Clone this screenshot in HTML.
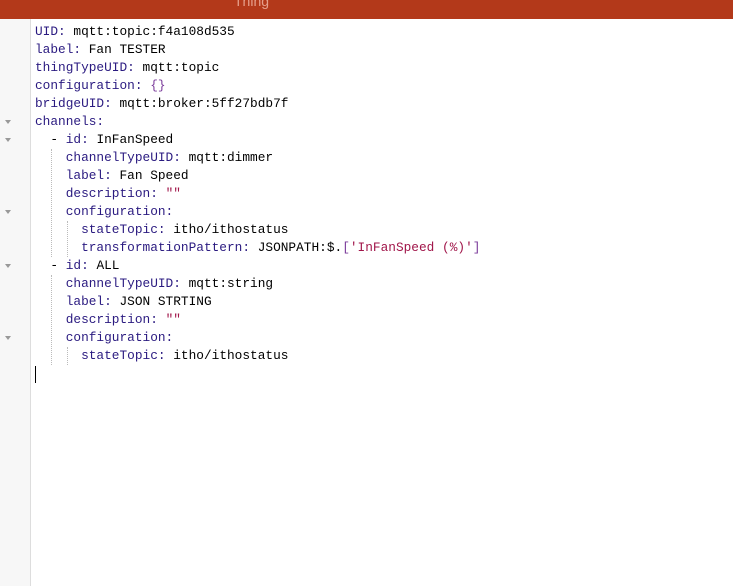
<!DOCTYPE html>
<html><head><meta charset="utf-8"><style>
html,body{margin:0;padding:0;width:733px;height:586px;overflow:hidden;background:#fff;}
.hdr{position:absolute;left:0;top:0;width:733px;height:19px;background:#b3391a;}
.hdr span{position:absolute;left:234px;top:-7px;font:14px "Liberation Sans",sans-serif;color:#e6a08c;}
.gut{position:absolute;left:0;top:19px;width:30px;height:567px;background:#f7f7f7;border-right:1px solid #ddd;}
.arr{position:absolute;left:5px;width:0;height:0;border-left:3px solid transparent;border-right:3px solid transparent;border-top:4px solid #999;}
.code{position:absolute;left:35px;top:23px;font:12.8px/18px "Liberation Mono",monospace;color:#000;white-space:pre;}
.k{color:#2a1a80;}
.b{color:#7a3a9a;}
.s{color:#a1164a;}
.g{position:absolute;border-left:1px dotted #bbb;width:0;}
.cur{position:absolute;left:35px;top:366px;width:1px;height:17px;background:#000;}
</style></head><body>
<div class="hdr"><span>Thing</span></div>
<div class="gut"></div>
<div class="arr" style="top:120px"></div>
<div class="arr" style="top:138px"></div>
<div class="arr" style="top:210px"></div>
<div class="arr" style="top:264px"></div>
<div class="arr" style="top:336px"></div>
<div class="g" style="left:51px;top:149px;height:108px"></div>
<div class="g" style="left:67px;top:221px;height:36px"></div>
<div class="g" style="left:51px;top:275px;height:90px"></div>
<div class="g" style="left:67px;top:347px;height:18px"></div>
<div class="code"><span class="k">UID:</span> mqtt:topic:f4a108d535
<span class="k">label:</span> Fan TESTER
<span class="k">thingTypeUID:</span> mqtt:topic
<span class="k">configuration:</span> <span class="b">{}</span>
<span class="k">bridgeUID:</span> mqtt:broker:5ff27bdb7f
<span class="k">channels:</span>
  - <span class="k">id:</span> InFanSpeed
    <span class="k">channelTypeUID:</span> mqtt:dimmer
    <span class="k">label:</span> Fan Speed
    <span class="k">description:</span> <span class="s">""</span>
    <span class="k">configuration:</span>
      <span class="k">stateTopic:</span> itho/ithostatus
      <span class="k">transformationPattern:</span> JSONPATH:$.<span class="b">[</span><span class="s">'InFanSpeed (%)'</span><span class="b">]</span>
  - <span class="k">id:</span> ALL
    <span class="k">channelTypeUID:</span> mqtt:string
    <span class="k">label:</span> JSON STRTING
    <span class="k">description:</span> <span class="s">""</span>
    <span class="k">configuration:</span>
      <span class="k">stateTopic:</span> itho/ithostatus
</div>
<div class="cur"></div>
</body></html>
